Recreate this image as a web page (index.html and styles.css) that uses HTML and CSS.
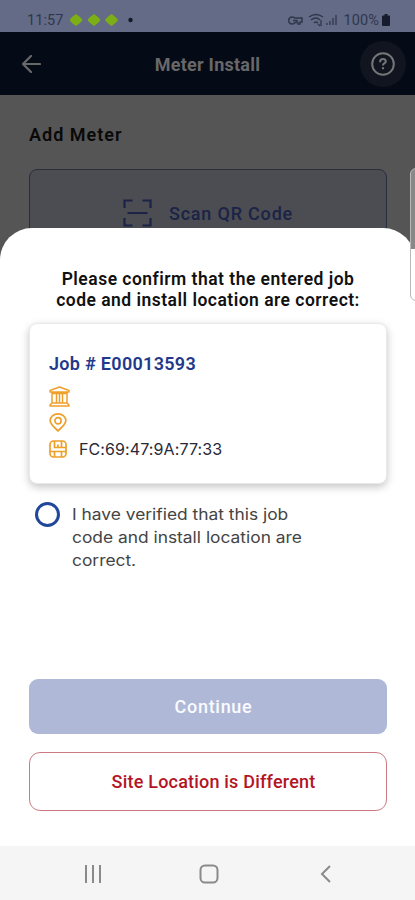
FILE: index.html
```html
<!DOCTYPE html>
<html lang="en">
<head>
<meta charset="utf-8">
<title>Meter Install</title>
<link rel="stylesheet" href="styles.css">
</head>
<body>
<div class="phone">
  <div class="status">
    <span class="time">11:57</span>
    <svg class="notices" width="64" height="14" viewBox="0 0 64 14"><g fill="#7cae16" stroke="#7cae16" stroke-width="2.500" stroke-linejoin="round"><path d="M6 2.500l2.500 2L11 7l-2.500 2.500-2.500 2-2.500-2L1 7l2.500-2.500z"/><path d="M24 2.500l2.500 2L29 7l-2.500 2.500-2.500 2-2.500-2L19 7l2.500-2.500z"/><path d="M41.500 2.500l2.500 2L46.500 7 44 9.500l-2.500 2-2.500-2L36.500 7 39 4.500z"/></g><circle cx="60.500" cy="7" r="2.200" fill="#141929"/></svg>
    <svg class="signals" width="52" height="16" viewBox="0 0 52 16" fill="none" stroke="#30374b" stroke-width="1.500"><path d="M7 6.500A3.500 3.500 0 1 0 7 10.500h2v-2H5M7 6h7v4h-2v2h-2v-1.500"/><path d="M21 5q7-5 14 0M23 8q5-4 9 0M26 11q2-2 4 0M33 8v6M30 12l2 2" stroke-width="1.300"/><path d="M39 13v-2M42 13V9M45 13V6M48 13V3" stroke-width="1.300"/></svg>
    <span class="percent">100%</span>
    <svg width="8" height="12" viewBox="0 0 8 12"><path d="M2.500 0h3v1.500H7q1 0 1 1V11q0 1-1 1H1q-1 0-1-1V2.500q0-1 1-1h1.500z" fill="#161c2d"/></svg>
  </div>
  <header class="header">
    <svg width="20" height="18" viewBox="0 0 20 18" fill="none" stroke="#686868" stroke-width="2.200" stroke-linecap="round" stroke-linejoin="round"><path d="M19 9H2M10 1L2 9l8 8"/></svg>
    <h1>Meter Install</h1>
    <div class="help"><svg width="26" height="26" viewBox="0 0 26 26" fill="none" stroke="#757678" stroke-width="2"><circle cx="13" cy="13" r="10.800"/><path d="M10.200 11.300V10q.3-2 2.800-2t2.800 2.200q0 1.300-1.600 2.200-1.200.6-1.200 2.100M13 16.300v2" stroke-width="2.100"/></svg></div>
  </header>
  <main class="page">
    <h2>Add Meter</h2>
    <div class="scan">
      <svg width="29" height="28" viewBox="0 0 29 28" fill="none" stroke="#1b2346" stroke-width="2.200"><path d="M1.500 9V1.500h8M19.500 1.500h8V9M1.500 19v7.500h8M19.500 26.500h8V19M4.500 14h20"/></svg>
      <span>Scan QR Code</span>
    </div>
  </main>
  <section class="sheet">
    <h3><span>Please confirm that the entered job</span><span>code and install location are correct:</span></h3>
    <div class="card">
      <div class="job">Job # E00013593</div>
      <svg class="bank" width="21" height="21" viewBox="0 0 21 21" fill="none" stroke="#eea02b" stroke-width="1.500" stroke-linejoin="round"><path d="M1 6V4.500L10.500 1 20 4.500V6zM3 6v1.500h15V6M3 8v9M7.500 8v9M10.500 8v9M13.500 8v9M18 8v9M3 17h15l2 2v1H1v-1z"/></svg>
      <svg class="pin" width="18" height="19" viewBox="0 0 19 20" fill="none" stroke="#eea02b" stroke-width="1.800"><path d="M9.500 18.800C6 15.500 1.200 12 1.200 8a8.200 7 0 0 1 16.600 0c0 4-4.800 7.500-8.300 10.800z"/><circle cx="9.500" cy="8.200" r="3.300"/></svg>
      <div class="mac"><svg width="18" height="18" viewBox="0 0 18 18" fill="none" stroke="#eea02b" stroke-width="1.700"><rect x="1" y="1" width="16" height="16" rx="3.500"/><path d="M1 11.500h16M5.500 1v6.500h7M9 7.500V4.500M12.500 1v6.500H17M5.500 11.500V17M12.500 11.500V17"/></svg><span>FC:69:47:9A:77:33</span></div>
    </div>
    <div class="verify">
      <i class="radio"></i>
      <p><span>I have verified that this job</span><span>code and install location are</span><span>correct.</span></p>
    </div>
    <div class="actions">
      <div class="button primary">Continue</div>
      <div class="button danger">Site Location is Different</div>
    </div>
  </section>
  <nav class="nav">
    <svg width="18" height="18" viewBox="0 0 18 18" stroke="#8a8a8a" stroke-width="2"><path d="M2 0v18M9 0v18M16 0v18"/></svg>
    <svg width="20" height="20" viewBox="0 0 20 20" fill="none" stroke="#8a8a8a" stroke-width="2"><rect x="1.500" y="1.500" width="17" height="17" rx="4.500"/></svg>
    <svg width="11" height="18" viewBox="0 0 11 18" fill="none" stroke="#8a8a8a" stroke-width="2"><path d="M10 1L2 9l8 8"/></svg>
  </nav>
  <div class="edge"></div>
</div>
</body>
</html>
```
FILE: styles.css
```css
* { box-sizing: border-box; }
body { margin: 0; font-family: Roboto, "Liberation Sans", sans-serif; }
h1, h2, h3, p { margin: 0; }
svg { display: block; flex: none; }
span { white-space: nowrap; }
.phone { position: relative; width: 415px; height: 900px; overflow: hidden; display: flex; flex-direction: column; background: #555; }
.status { height: 32px; flex: none; display: flex; align-items: center; padding: 8px 25px 0 27px; background: #636b87; color: #30374b; font-size: 14.500px; }
.time { width: 37px; letter-spacing: .1px; }
.notices { margin-left: 6px; }
.signals { margin-left: auto; }
.percent { margin: 0 3px 0 4px; letter-spacing: .1px; }
.header { height: 63px; flex: none; display: flex; align-items: center; justify-content: space-between; padding: 0 9px 0 21px; background: #050a17; }
.header h1 { margin-left: 14px; margin-top: 2px; font-size: 18px; line-height: 24px; font-weight: 700; letter-spacing: .25px; color: #686868; }
.help { width: 46px; height: 46px; border-radius: 50%; background: #11151f; display: grid; place-items: center; }
.page { height: 133px; flex: none; padding: 28px 28px 0 29px; overflow: hidden; }
.page h2 { font-size: 18px; line-height: 24px; font-weight: 600; color: #090909; letter-spacing: 1px; }
.scan { height: 90px; margin-top: 22px; border: 1px solid #282e3e; border-radius: 8px; background: #4b4d52; display: flex; justify-content: center; align-items: center; gap: 17px; color: #1b2346; font-size: 18px; font-weight: 500; letter-spacing: .8px; padding-bottom: 2px; }
.sheet { height: 618px; flex: none; background: #fff; border-radius: 32px 32px 0 0; padding: 41px 28px 0 29px; }
.sheet h3 { text-align: center; font-size: 17.500px; line-height: 20.500px; font-weight: 600; letter-spacing: .48px; color: #111; }
.sheet h3 span { display: block; }
.card { height: 161px; margin-top: 13px; padding: 28px 19px 0; border-radius: 8px; border: 1px solid #e9e9e9; box-shadow: 0 3px 8px rgba(0,0,0,.23); background: #fff; }
.job { height: 24px; line-height: 24px; font-size: 18px; font-weight: 600; letter-spacing: .3px; color: #22398b; }
.bank { margin-top: 10px; }
.pin { margin-top: 6px; }
.mac { height: 20px; margin-top: 7px; display: flex; align-items: center; gap: 12px; font-size: 16px; color: #292938; }
.mac span { font-family: Inter, Roboto, sans-serif; letter-spacing: .1px; }
.verify { margin: 18px 0 0 6px; display: flex; gap: 12px; }
.radio { width: 25px; height: 25px; border: 3px solid #21479a; border-radius: 50%; }
.verify p { margin-top: 1px; font-family: Inter, Roboto, sans-serif; font-size: 15.500px; line-height: 23.200px; color: #444; }
.verify span { display: block; transform: scaleX(1.12); transform-origin: left; }
.actions { display: flex; flex-direction: column; gap: 18px; margin-top: 106px; }
.button { height: 55px; border-radius: 9px; display: grid; place-items: center; font-weight: 500; font-size: 18px; letter-spacing: .2px; padding-left: 11px; }
.primary { background: #afb8d6; color: #f9fbff; letter-spacing: .7px; }
.danger { height: 59px; border: 1px solid #cd7981; border-radius: 11px; color: #b31524; }
.nav { height: 54px; flex: none; background: #f5f5f5; display: grid; grid-template-columns: 186px 46px 186px; place-items: center; padding-top: 1px; }
.edge { position: absolute; left: 410px; top: 168px; width: 8px; height: 133px; border: 1px solid #b9b9b9; border-radius: 6px 0 0 6px; background: linear-gradient(#888 0 80px, #fff 80px); }
```
